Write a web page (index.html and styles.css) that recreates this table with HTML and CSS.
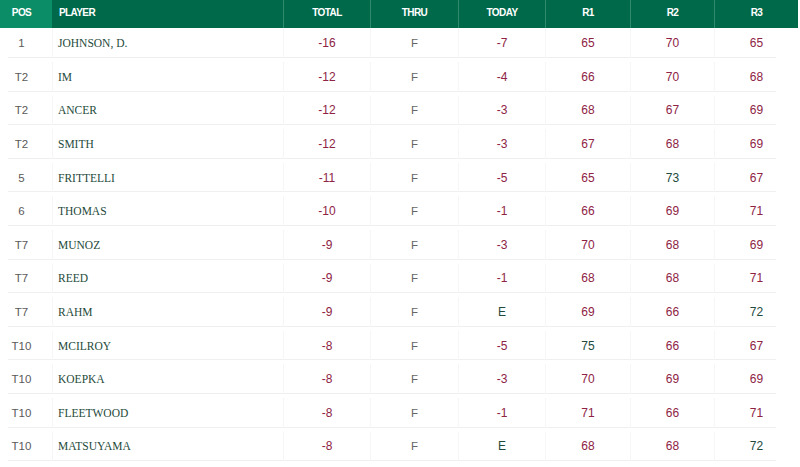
FILE: index.html
```html
<!DOCTYPE html>
<html lang="en">
<head>
<meta charset="utf-8">
<title>Leaderboard</title>
<link rel="stylesheet" href="styles.css">
</head>
<body>
<div class="board">
  <div class="row head">
    <div class="c pos">POS</div>
    <div class="c player">PLAYER</div>
    <div class="c">TOTAL</div>
    <div class="c">THRU</div>
    <div class="c">TODAY</div>
    <div class="c">R1</div>
    <div class="c">R2</div>
    <div class="c">R3</div>
  </div>
  <div class="row body first">
    <div class="c pos">1</div><div class="c player">JOHNSON, D.</div><div class="c red">-16</div><div class="c thru">F</div><div class="c red">-7</div><div class="c red">65</div><div class="c red">70</div><div class="c red">65</div>
  </div>
  <div class="row body">
    <div class="c pos">T2</div><div class="c player">IM</div><div class="c red">-12</div><div class="c thru">F</div><div class="c red">-4</div><div class="c red">66</div><div class="c red">70</div><div class="c red">68</div>
  </div>
  <div class="row body">
    <div class="c pos">T2</div><div class="c player">ANCER</div><div class="c red">-12</div><div class="c thru">F</div><div class="c red">-3</div><div class="c red">68</div><div class="c red">67</div><div class="c red">69</div>
  </div>
  <div class="row body">
    <div class="c pos">T2</div><div class="c player">SMITH</div><div class="c red">-12</div><div class="c thru">F</div><div class="c red">-3</div><div class="c red">67</div><div class="c red">68</div><div class="c red">69</div>
  </div>
  <div class="row body">
    <div class="c pos">5</div><div class="c player">FRITTELLI</div><div class="c red">-11</div><div class="c thru">F</div><div class="c red">-5</div><div class="c red">65</div><div class="c grn">73</div><div class="c red">67</div>
  </div>
  <div class="row body">
    <div class="c pos">6</div><div class="c player">THOMAS</div><div class="c red">-10</div><div class="c thru">F</div><div class="c red">-1</div><div class="c red">66</div><div class="c red">69</div><div class="c red">71</div>
  </div>
  <div class="row body">
    <div class="c pos">T7</div><div class="c player">MUNOZ</div><div class="c red">-9</div><div class="c thru">F</div><div class="c red">-3</div><div class="c red">70</div><div class="c red">68</div><div class="c red">69</div>
  </div>
  <div class="row body">
    <div class="c pos">T7</div><div class="c player">REED</div><div class="c red">-9</div><div class="c thru">F</div><div class="c red">-1</div><div class="c red">68</div><div class="c red">68</div><div class="c red">71</div>
  </div>
  <div class="row body">
    <div class="c pos">T7</div><div class="c player">RAHM</div><div class="c red">-9</div><div class="c thru">F</div><div class="c grn">E</div><div class="c red">69</div><div class="c red">66</div><div class="c grn">72</div>
  </div>
  <div class="row body">
    <div class="c pos">T10</div><div class="c player">MCILROY</div><div class="c red">-8</div><div class="c thru">F</div><div class="c red">-5</div><div class="c grn">75</div><div class="c red">66</div><div class="c red">67</div>
  </div>
  <div class="row body">
    <div class="c pos">T10</div><div class="c player">KOEPKA</div><div class="c red">-8</div><div class="c thru">F</div><div class="c red">-3</div><div class="c red">70</div><div class="c red">69</div><div class="c red">69</div>
  </div>
  <div class="row body">
    <div class="c pos">T10</div><div class="c player">FLEETWOOD</div><div class="c red">-8</div><div class="c thru">F</div><div class="c red">-1</div><div class="c red">71</div><div class="c red">66</div><div class="c red">71</div>
  </div>
  <div class="row body">
    <div class="c pos">T10</div><div class="c player">MATSUYAMA</div><div class="c red">-8</div><div class="c thru">F</div><div class="c grn">E</div><div class="c red">68</div><div class="c red">68</div><div class="c grn">72</div>
  </div>
</div>
</body>
</html>
```
FILE: styles.css
```css
html, body {
  margin: 0;
  padding: 0;
  background: #ffffff;
}

.board {
  width: 798px;
  font-family: "Liberation Sans", Arial, sans-serif;
}

.row {
  display: grid;
  grid-template-columns: 52px 231px 87px 88px 87px 85px 84px 84px;
  box-sizing: border-box;
}

.c {
  display: flex;
  align-items: center;
  justify-content: center;
  box-sizing: border-box;
  white-space: nowrap;
}

/* header */
.head {
  height: 28px;
  background: #00694a;
  color: #ffffff;
  font-weight: bold;
  font-size: 10px;
  letter-spacing: -0.6px;
}

.head .c {
  padding-bottom: 3px;
  border-left: 1px solid #2f8a6c;
}

.head .pos {
  background: #0b8d67;
  border-left: none;
  padding-right: 9px;
}

.head .player {
  border-left: none;
  justify-content: flex-start;
  padding-left: 7px;
}

/* body */
.body {
  height: 33.6px;
  padding-top: 4px;
  font-size: 12px;
  background: linear-gradient(#efefef, #efefef) no-repeat 8px 100% / 768px 1px;
}

.body.first {
  height: 30px;
  padding-top: 0;
}

.body .c {
  height: 100%;
  border-left: 1px solid #f6f6f6;
}

.body .c:first-child {
  border-left: none;
}

.body .pos {
  color: #5a5a5a;
  font-size: 11.5px;
  padding-right: 9px;
}

.body .player {
  justify-content: flex-start;
  padding-left: 5px;
  font-family: "Liberation Serif", "Times New Roman", serif;
  font-size: 11.5px;
  color: #1e4a3b;
}

.thru {
  color: #666666;
  font-size: 11.5px;
}

.red {
  color: #8e2344;
}

.grn {
  color: #224a3c;
}
```
